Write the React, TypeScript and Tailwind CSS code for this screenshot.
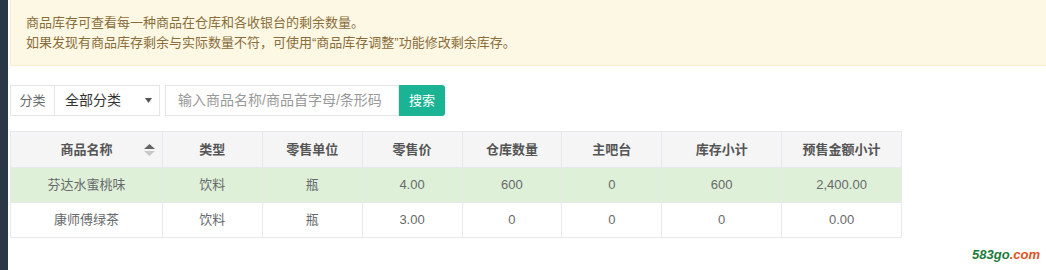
import React from "react";

const font = { fontFamily: '"Liberation Sans", "Noto Sans CJK SC", sans-serif' };

const cols = [
  { t: "商品名称", w: "w-[152px]" },
  { t: "类型", w: "w-[100px]" },
  { t: "零售单位", w: "w-[100px]" },
  { t: "零售价", w: "w-[100px]" },
  { t: "仓库数量", w: "w-[100px]" },
  { t: "主吧台", w: "w-[100px]" },
  { t: "库存小计", w: "w-[120px]" },
  { t: "预售金额小计", w: "w-[120px]" },
];

const rows = [
  { bg: "bg-[#dff0d8]", d: ["芬达水蜜桃味", "饮料", "瓶", "4.00", "600", "0", "600", "2,400.00"] },
  { bg: "bg-white", d: ["康师傅绿茶", "饮料", "瓶", "3.00", "0", "0", "0", "0.00"] },
];

export default function App() {
  return (
    <div className="flex w-[1046px] h-[270px] bg-white overflow-hidden text-[13px] text-[#676a6c]" style={font}>
      <div className="w-[8px] bg-[#293846] shrink-0" />
      <div className="flex-1 flex flex-col pl-[2px] relative">
        <div className="h-[66px] bg-[#fcf8e3] border-b border-l border-[#f5ecd2] text-[#8a6d3b] pl-[15px] pt-[13px] leading-[20px] text-[13px]">
          <div>商品库存可查看每一种商品在仓库和各收银台的剩余数量。</div>
          <div>如果发现有商品库存剩余与实际数量不符，可使用“商品库存调整”功能修改剩余库存。</div>
        </div>
        <div className="flex mt-[19px] h-[31px]">
          <div className="w-[45px] border border-[#e5e6e7] flex items-center justify-center text-[#676a6c] bg-white">分类</div>
          <div className="w-[105px] border border-l-0 border-[#e5e6e7] flex items-center justify-between pl-[10px] pr-[7px] text-[#333] text-[14px]">
            <span>全部分类</span>
            <svg width="7" height="5" viewBox="0 0 7 5"><path d="M0 0h7L3.5 5z" fill="#555" /></svg>
          </div>
          <div className="w-[234px] ml-[5px] border border-[#e5e6e7] flex items-center pl-[12px] text-[#999] text-[14px]">
            输入商品名称/商品首字母/条形码
          </div>
          <div className="w-[46px] bg-[#1ab394] rounded-r-[3px] text-white flex items-center justify-center text-[13px]">搜索</div>
        </div>
        <div className="mt-[15px] flex flex-col w-[892px] border border-[#e7eaec] border-r-0 border-b-0">
          <div className="flex h-[36px] bg-[#f5f5f6] font-bold text-[#555]">
            {cols.map((c, i) => (
              <div key={i} className={`${c.w} border-r border-b border-[#e7eaec] flex items-center justify-center relative`}>
                {c.t}
                {i === 0 && (
                  <svg className="absolute right-[7px] top-[12px]" width="11" height="12" viewBox="0 0 11 12">
                    <path d="M0 5L5.5 0L11 5z" fill="#666" />
                    <path d="M0 7L5.5 12L11 7z" fill="#c8c8c8" />
                  </svg>
                )}
              </div>
            ))}
          </div>
          {rows.map((r, ri) => (
            <div key={ri} className={`flex h-[35px] ${r.bg}`}>
              {r.d.map((v, i) => (
                <div key={i} className={`${cols[i].w} border-r border-b border-[#e7eaec] flex items-center justify-center`}>
                  {v}
                </div>
              ))}
            </div>
          ))}
        </div>
        <div className="absolute right-[6px] bottom-[9px] text-[13px] italic font-bold leading-none" style={{ fontFamily: '"Liberation Sans", sans-serif' }}>
          <span className="text-[#1d7a3a]">583go</span>
          <span className="text-[#e0521f]">.com</span>
        </div>
      </div>
    </div>
  );
}
